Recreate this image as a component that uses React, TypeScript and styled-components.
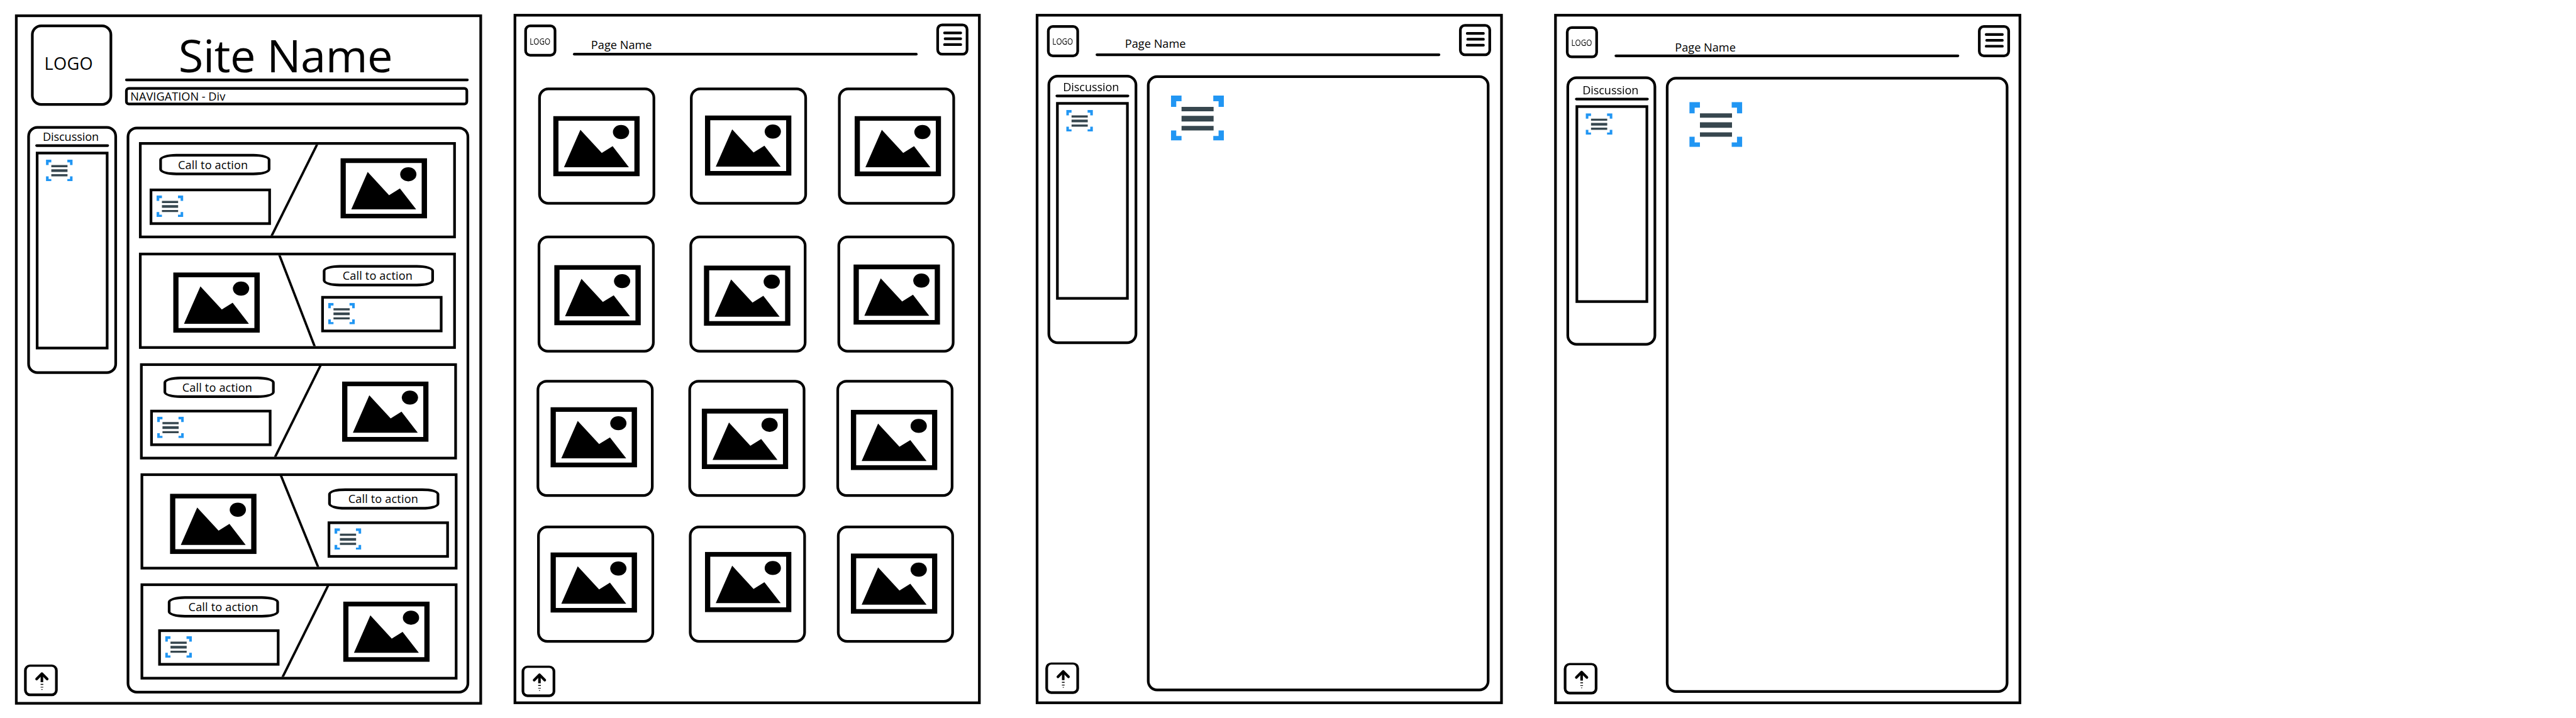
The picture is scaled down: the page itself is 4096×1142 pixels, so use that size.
import React from "react";
import styled, { createGlobalStyle } from "styled-components";

/* The boards are drawn on a 4820 x 1344 canvas and scaled down to the window. */
const CANVAS_WIDTH = 4820;
const CANVAS_HEIGHT = 1344;
const VIEW_WIDTH = 4096;
const VIEW_HEIGHT = 1142;

const INK = "#000";
const ACCENT = "#2196f3";
const SLATE = "#37474f";

const GlobalStyle = createGlobalStyle`
  *, *::before, *::after { box-sizing: border-box; }
  body { margin: 0; background: #fff; }
`;

const Viewport = styled.div`
  width: ${VIEW_WIDTH}px;
  height: ${VIEW_HEIGHT}px;
  overflow: hidden;
  background: #fff;
`;

const Canvas = styled.main`
  display: flex;
  align-items: flex-start;
  width: ${CANVAS_WIDTH}px;
  height: ${CANVAS_HEIGHT}px;
  transform: scale(${VIEW_WIDTH / CANVAS_WIDTH}, ${VIEW_HEIGHT / CANVAS_HEIGHT});
  transform-origin: 0 0;
  color: ${INK};
  font-family: "Open Sans", "Noto Sans", sans-serif;
  font-size: 21.4px;
  line-height: 24px;
  white-space: nowrap;
`;

const Board = styled.section<{ $top: number; $left: number }>`
  display: flex;
  flex-direction: column;
  flex: none;
  width: 874px;
  height: 1292px;
  margin-top: ${(p) => p.$top}px;
  margin-left: ${(p) => p.$left}px;
  border: 5px solid ${INK};
  background: #fff;
`;

const Rule = styled.div`
  flex: none;
  height: 5px;
  border-radius: 2.5px;
  background: ${INK};
`;

/* ---------- Home header ---------- */

const HomeHeader = styled.header`
  display: flex;
  height: 152px;
  margin: 14px 0 0 25px;
`;

const HomeLogo = styled.div`
  width: 152px;
  height: 152px;
  padding: 50px 0 0 20px;
  border: 5px solid ${INK};
  border-radius: 19px;
  font-size: 32px;
  line-height: 36px;
  letter-spacing: 0.3px;
`;

const Masthead = styled.div`
  display: flex;
  flex-direction: column;
  width: 643px;
  margin-left: 24px;
  padding-top: 12px;
`;

const SiteName = styled.h1`
  height: 88px;
  margin: 0 0 1px;
  padding-left: 100px;
  font-size: 85px;
  font-weight: 400;
  line-height: 88px;
  letter-spacing: -0.6px;
`;

const Navigation = styled.nav`
  width: 642px;
  height: 34px;
  margin-top: 11px;
  padding-left: 5px;
  border: 5px solid ${INK};
  border-radius: 7px;
`;

/* ---------- Inner page header ---------- */

const PageHeader = styled.header<{ $top: number; $left: number }>`
  display: flex;
  flex: none;
  height: 62px;
  margin: ${(p) => p.$top}px 0 0 ${(p) => p.$left}px;
`;

const SmallLogo = styled.div`
  width: 60px;
  height: 60px;
  margin-top: 2px;
  padding: 15.5px 0 0 5px;
  border: 5px solid ${INK};
  border-radius: 11px;
  font-size: 16.3px;
  line-height: 20px;

  span {
    display: inline-block;
    transform: scaleX(0.85);
    transform-origin: 0 50%;
  }
`;

const TitleArea = styled.div`
  display: flex;
  flex-direction: column;
  width: 645px;
  height: 60px;
  margin-left: 31px;
`;

const PageName = styled.h2<{ $top: number; $left: number }>`
  height: 24px;
  margin: ${(p) => p.$top}px 0 auto ${(p) => p.$left}px;
  font-size: 21.4px;
  font-weight: 400;
  line-height: 24px;
`;

const MenuButton = styled.div`
  display: flex;
  flex-direction: column;
  gap: 6px;
  width: 60px;
  height: 60px;
  margin-left: 35px;
  padding: 10px 0 0 8px;
  border: 5px solid ${INK};
  border-radius: 11px;
`;

const MenuBar = styled.i`
  width: 35px;
  height: 5px;
  border-radius: 2px;
  background: ${INK};

  &:nth-child(2) {
    width: 34px;
    margin-left: 1px;
  }
`;

/* ---------- Body: sidebar and content ---------- */

const Body = styled.div<{ $top: number; $left: number }>`
  display: flex;
  flex: 1;
  align-items: stretch;
  gap: 18px;
  min-height: 0;
  margin: ${(p) => p.$top}px 0 0 ${(p) => p.$left}px;
`;

const Sidebar = styled.aside`
  display: flex;
  flex-direction: column;
  width: 168px;
`;

const DiscussionPanel = styled.div<{ $height: number; $top: number; $shift: number }>`
  flex: none;
  height: ${(p) => p.$height}px;
  padding: ${(p) => p.$top}px 0 0 ${(p) => p.$shift}px;
  border: 5px solid ${INK};
  border-radius: 19px;
`;

const DiscussionTitle = styled.div`
  height: 24px;
  padding-left: 24px;
  letter-spacing: -0.15px;
`;

const DiscussionRule = styled(Rule)`
  width: 138px;
  margin: 2px 0 9px 10px;
`;

const DiscussionBox = styled.div`
  width: 136px;
  height: 370px;
  margin-left: 11px;
  padding: 10px 0 0 14px;
  border: 5px solid ${INK};
`;

const ContentPanel = styled.div<{ $height: number }>`
  width: 641px;
  height: ${(p) => p.$height}px;
  margin-top: 1px;
  border: 5px solid ${INK};
  border-radius: 19px;
`;

const TextBlock = styled.div<{ $top: number; $left: number }>`
  margin: ${(p) => p.$top}px 0 0 ${(p) => p.$left}px;
`;

const UpButtonFrame = styled.div<{ $left: number; $bottom: number }>`
  flex: none;
  width: 63px;
  height: 59px;
  margin: auto 0 ${(p) => p.$bottom}px ${(p) => p.$left}px;
  border: 5px solid ${INK};
  border-top-width: 4px;
  border-radius: 11px;

  svg {
    display: block;
  }
`;

/* ---------- Call-to-action cards ---------- */

const Card = styled.article<{ $left: number; $gap: number }>`
  position: relative;
  display: flex;
  width: 593px;
  height: 180px;
  margin: ${(p) => p.$gap}px 0 0 ${(p) => p.$left}px;
  border: 5px solid ${INK};
`;

const Slash = styled.svg`
  position: absolute;
  top: 0;
  left: 0;
`;

const Copy = styled.div`
  flex: none;
  width: 300px;
`;

const CallToAction = styled.div<{ $top: number; $left: number; $text: number }>`
  width: 208px;
  height: 40px;
  margin: ${(p) => p.$top}px 0 0 ${(p) => p.$left}px;
  padding: 3px 0 0 ${(p) => p.$text}px;
  border: 5px solid ${INK};
  border-radius: 32px / 11px;
  letter-spacing: 0.15px;
`;

const CopyBox = styled.div<{ $gap: number; $left: number }>`
  width: 227px;
  height: 68px;
  margin: ${(p) => p.$gap}px 0 0 ${(p) => p.$left}px;
  padding: 8px;
  border: 5px solid ${INK};
`;

const Figure = styled.div<{ $top: number; $left: number }>`
  flex: none;
  width: 283px;
  padding: ${(p) => p.$top}px 0 0 ${(p) => p.$left}px;
`;

/* ---------- Gallery ---------- */

const Gallery = styled.div`
  display: flex;
  flex-direction: column;
  flex: none;
`;

const GalleryRow = styled.div<{ $gap: number; $left: number }>`
  display: grid;
  grid-template-columns: 284px 277px 219px;
  margin: ${(p) => p.$gap}px 0 0 ${(p) => p.$left}px;
`;

const Tile = styled.div<{ $top: number; $left: number }>`
  width: 219px;
  height: 219px;
  padding: ${(p) => p.$top - 5}px 0 0 ${(p) => p.$left - 5}px;
  border: 5px solid ${INK};
  border-radius: 19px;
`;

const Drawing = styled.svg`
  display: block;
`;

/* ---------- Drawings ---------- */

function Picture() {
  return (
    <Drawing width="162" height="113" viewBox="0 0 162 113">
      <path fill={INK} fillRule="evenodd" d="M0 0h162v113H0zM10 9v95h142V9z" />
      <ellipse cx="127" cy="30.2" rx="15.2" ry="13.2" fill={INK} />
      <path fill={INK} d="M20.3 96L51 26l40 43.3 20.3-12.6L141.7 96z" />
    </Drawing>
  );
}

function TextIcon({ large = false }: { large?: boolean }) {
  return (
    <Drawing
      width={large ? 99 : 50}
      height={large ? 84 : 40}
      viewBox="0 0 50 40"
      preserveAspectRatio="none"
    >
      <path
        fill={ACCENT}
        d="M0 0h10v5H5v5H0zM40 0h10v10h-5V5h-5zM0 31h5v5h5v4H0zM45 31h5v9H40v-4h5z"
      />
      <path fill={SLATE} d="M10 10h30.3v4H10zM10 18h30.3v5H10zM10 27h30.3v4H10z" />
    </Drawing>
  );
}

function UpButton({ left, bottom }: { left: number; bottom: number }) {
  return (
    <UpButtonFrame $left={left} $bottom={bottom}>
      <svg width="53" height="50" viewBox="5 4 53 50">
        <path
          d="M23.5 27L33.4 17l9.9 10"
          fill="none"
          stroke={INK}
          strokeWidth="5"
          strokeLinecap="round"
          strokeLinejoin="round"
        />
        <path fill={INK} d="M31 17h4.8v16H31zM31 36.3h5v1.7h-5zM31 41.7h5V43h-5zM32.5 46h2v1.2h-2z" />
      </svg>
    </UpButtonFrame>
  );
}

/* ---------- Data ---------- */

type Point = [number, number];

interface CardSpec {
  left: number;
  gap: number;
  flipped: boolean;
  button: Point;
  text: number;
  box: Point;
  picture: Point;
  slash: Point;
}

/* Coordinates are measured from the outer corner of each card. */
const cards: CardSpec[] = [
  { left: 18, gap: 24, flipped: false, button: [38, 22], text: 30, box: [20, 87], picture: [377, 30], slash: [333.5, 248] },
  { left: 18, gap: 27, flipped: true, button: [344, 23], text: 32, box: [341, 81], picture: [64, 37], slash: [262.6, 329] },
  { left: 20, gap: 27, flipped: false, button: [44, 25], text: 30, box: [19, 87], picture: [378, 34], slash: [337.8, 252.5] },
  { left: 21, gap: 26, flipped: true, button: [351, 28], text: 32.5, box: [350, 90], picture: [55, 38], slash: [262.6, 332.5] },
  { left: 21, gap: 26, flipped: false, button: [51, 24], text: 33.5, box: [33, 86], picture: [379, 34], slash: [351, 265.5] },
];

interface RowSpec {
  gap: number;
  left: number;
  pictures: Point[];
}

const galleryRows: RowSpec[] = [
  { gap: 58, left: 41, pictures: [[28, 53], [28, 52], [31, 53]] },
  { gap: 58, left: 40, pictures: [[31, 55], [27, 56], [30, 54]] },
  { gap: 51, left: 38, pictures: [[26, 51], [25, 54], [27, 56]] },
  { gap: 54, left: 39, pictures: [[25, 50], [30, 49], [26, 52]] },
];

/* ---------- Sections ---------- */

function ActionCard({ spec }: { spec: CardSpec }) {
  const [bx, by] = spec.button;
  const [tx, ty] = spec.box;
  const [px, py] = spec.picture;
  const copyStart = spec.flipped ? 288 : 5;
  const figureStart = spec.flipped ? 5 : 305;
  const copy = (
    <Copy>
      <CallToAction $top={by - 5} $left={bx - copyStart} $text={spec.text}>
        Call to action
      </CallToAction>
      <CopyBox $gap={ty - by - 40} $left={tx - copyStart}>
        <TextIcon />
      </CopyBox>
    </Copy>
  );
  const figure = (
    <Figure $top={py - 5} $left={px - figureStart}>
      <Picture />
    </Figure>
  );
  return (
    <Card $left={spec.left} $gap={spec.gap}>
      <Slash width="583" height="170" viewBox="5 5 583 170">
        <line x1={spec.slash[0]} y1="4" x2={spec.slash[1]} y2="176" stroke={INK} strokeWidth="4.4" />
      </Slash>
      {spec.flipped ? figure : copy}
      {spec.flipped ? copy : figure}
    </Card>
  );
}

function Discussion({ height, top, shift = 0 }: { height: number; top: number; shift?: number }) {
  return (
    <DiscussionPanel $height={height} $top={top} $shift={shift}>
      <DiscussionTitle>Discussion</DiscussionTitle>
      <DiscussionRule />
      <DiscussionBox>
        <TextIcon />
      </DiscussionBox>
    </DiscussionPanel>
  );
}

interface HeaderProps {
  top: number;
  left: number;
  title: Point;
}

function Header({ top, left, title }: HeaderProps) {
  return (
    <PageHeader $top={top} $left={left}>
      <SmallLogo>
        <span>LOGO</span>
      </SmallLogo>
      <TitleArea>
        <PageName $top={title[1]} $left={title[0]}>
          Page Name
        </PageName>
        <Rule />
      </TitleArea>
      <MenuButton>
        <MenuBar />
        <MenuBar />
        <MenuBar />
      </MenuButton>
    </PageHeader>
  );
}

function HomeBoard() {
  return (
    <Board $top={27} $left={28}>
      <HomeHeader>
        <HomeLogo>LOGO</HomeLogo>
        <Masthead>
          <SiteName>Site Name</SiteName>
          <Rule />
          <Navigation>NAVIGATION - Div</Navigation>
        </Masthead>
      </HomeHeader>
      <Body $top={38} $left={18}>
        <Sidebar>
          <Discussion height={464} top={3} />
          <UpButton left={-6} bottom={11} />
        </Sidebar>
        <ContentPanel $height={1061}>
          {cards.map((spec, i) => (
            <ActionCard key={i} spec={spec} />
          ))}
        </ContentPanel>
      </Body>
    </Board>
  );
}

function GalleryBoard() {
  return (
    <Board $top={26} $left={59}>
      <Header top={13} left={15} title={[34, 27.5]} />
      <Gallery>
        {galleryRows.map((row, i) => (
          <GalleryRow key={i} $gap={row.gap} $left={row.left}>
            {row.pictures.map(([x, y], j) => (
              <Tile key={j} $left={x} $top={y}>
                <Picture />
              </Tile>
            ))}
          </GalleryRow>
        ))}
      </Gallery>
      <UpButton left={10} bottom={8} />
    </Board>
  );
}

function ArticleBoard() {
  return (
    <Board $top={26} $left={103}>
      <Header top={14} left={16} title={[55, 23.7]} />
      <Body $top={33} $left={17}>
        <Sidebar>
          <Discussion height={504} top={6} />
          <UpButton left={-4} bottom={14} />
        </Sidebar>
        <ContentPanel $height={1153}>
          <TextBlock $top={33} $left={40}>
            <TextIcon large />
          </TextBlock>
        </ContentPanel>
      </Body>
    </Board>
  );
}

function DiscussionBoard() {
  return (
    <Board $top={26} $left={96}>
      <Header top={16} left={17} title={[113, 28.7]} />
      <Body $top={34} $left={18}>
        <Sidebar>
          <Discussion height={504} top={9} shift={1} />
          <UpButton left={-5} bottom={13} />
        </Sidebar>
        <ContentPanel $height={1153}>
          <TextBlock $top={42} $left={39}>
            <TextIcon large />
          </TextBlock>
        </ContentPanel>
      </Body>
    </Board>
  );
}

export default function App() {
  return (
    <Viewport>
      <GlobalStyle />
      <Canvas>
        <HomeBoard />
        <GalleryBoard />
        <ArticleBoard />
        <DiscussionBoard />
      </Canvas>
    </Viewport>
  );
}
